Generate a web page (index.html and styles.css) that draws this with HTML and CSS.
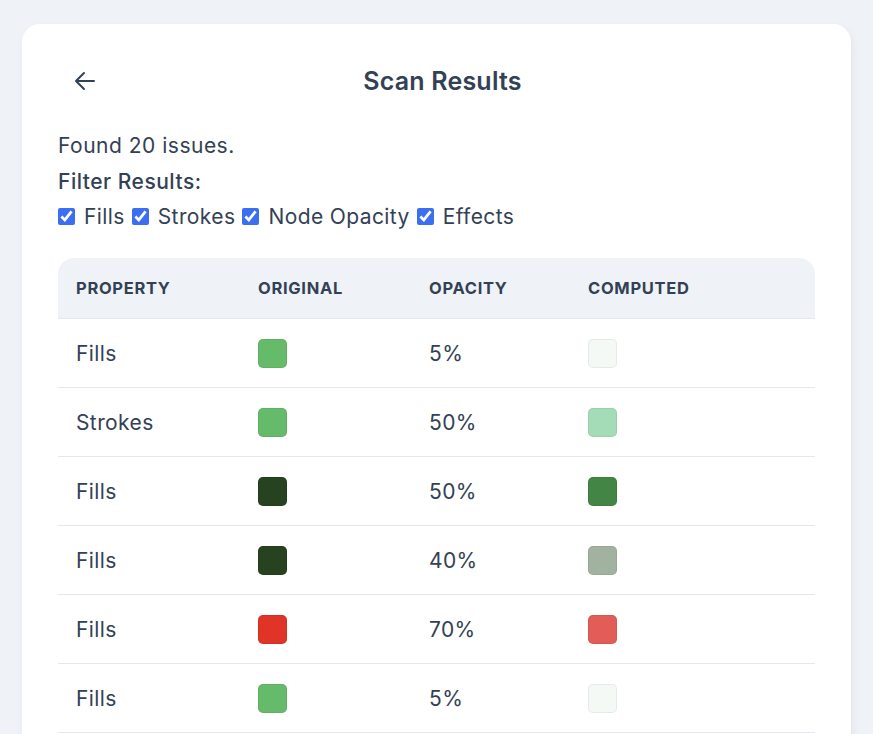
FILE: index.html
```html
<!DOCTYPE html>
<html>
<head>
<meta charset="utf-8">
<link rel="stylesheet" href="styles.css">
</head>
<body>
<div class="card">
  <div class="header">
    <button class="back" aria-label="Back">
      <svg width="22" height="22" viewBox="0 0 22 22" fill="none" stroke="#334155" stroke-width="2" stroke-linecap="round" stroke-linejoin="round"><path d="M20 11H2M10 3 2 11l8 8"/></svg>
    </button>
    <h1 class="title">Scan Results</h1>
  </div>
  <p class="found">Found 20 issues.</p>
  <p class="filter-label">Filter Results:</p>
  <div class="filters">
    <label class="filter"><input type="checkbox" checked> Fills</label>
    <label class="filter"><input type="checkbox" checked> Strokes</label>
    <label class="filter"><input type="checkbox" checked> Node Opacity</label>
    <label class="filter"><input type="checkbox" checked> Effects</label>
  </div>
  <div class="table">
    <div class="row head">
      <div class="cell">Property</div>
      <div class="cell">Original</div>
      <div class="cell">Opacity</div>
      <div class="cell">Computed</div>
    </div>
    <div class="row">
      <div class="cell">Fills</div>
      <div class="cell"><span class="swatch" style="background:#66bb6a"></span></div>
      <div class="cell">5%</div>
      <div class="cell"><span class="swatch" style="background:#f4f9f5"></span></div>
    </div>
    <div class="row">
      <div class="cell">Strokes</div>
      <div class="cell"><span class="swatch" style="background:#66bb6a"></span></div>
      <div class="cell">50%</div>
      <div class="cell"><span class="swatch" style="background:#a3dcb6"></span></div>
    </div>
    <div class="row">
      <div class="cell">Fills</div>
      <div class="cell"><span class="swatch" style="background:#27421f"></span></div>
      <div class="cell">50%</div>
      <div class="cell"><span class="swatch" style="background:#428545"></span></div>
    </div>
    <div class="row">
      <div class="cell">Fills</div>
      <div class="cell"><span class="swatch" style="background:#27421f"></span></div>
      <div class="cell">40%</div>
      <div class="cell"><span class="swatch" style="background:#a2b2a0"></span></div>
    </div>
    <div class="row">
      <div class="cell">Fills</div>
      <div class="cell"><span class="swatch" style="background:#e03428"></span></div>
      <div class="cell">70%</div>
      <div class="cell"><span class="swatch" style="background:#e25d57"></span></div>
    </div>
    <div class="row">
      <div class="cell">Fills</div>
      <div class="cell"><span class="swatch" style="background:#66bb6a"></span></div>
      <div class="cell">5%</div>
      <div class="cell"><span class="swatch" style="background:#f4f9f6"></span></div>
    </div>
  </div>
</div>
</body>
</html>
```

FILE: styles.css
```css
* { box-sizing: border-box; }
html, body { margin: 0; }
body {
  background: #eff3f8;
  padding: 24px 22px;
  font-family: Inter, "Noto Sans", sans-serif;
  color: #334155;
  height: 734px;
  overflow: hidden;
}
.card {
  background: #fff;
  border-radius: 18px;
  padding: 36px 36px 36px 36px;
  box-shadow: 2px 4px 10px rgba(15, 23, 42, 0.06);
  min-height: 900px;
}
.header {
  display: flex;
  align-items: center;
  height: 42px;
}
.back {
  border: 0;
  background: none;
  padding: 0;
  margin-left: 16px;
  width: 22px;
  height: 22px;
  display: flex;
  cursor: pointer;
}
.title {
  flex: 1;
  margin: 0;
  text-align: center;
  font-size: 25px;
  font-weight: 600;
  letter-spacing: 0.2px;
  color: #334155;
  padding-right: 26px;
}
p { margin: 0; }
.found {
  margin-top: 26px;
  font-size: 21px;
  line-height: 36px;
  letter-spacing: 0.5px;
}
.filter-label {
  font-size: 21px;
  line-height: 36px;
  font-weight: 500;
  letter-spacing: 0.5px;
}
.filters {
  display: flex;
  align-items: center;
  height: 32px;
  font-size: 21px;
  letter-spacing: 0.4px;
  gap: 7px;
}
.filter {
  display: flex;
  align-items: center;
  gap: 9px;
}
.filter input {
  margin: 0;
  width: 17px;
  height: 17px;
  accent-color: #3b6ef0;
}
.table {
  margin-top: 26px;
}
.row {
  display: grid;
  grid-template-columns: 182px 171px 159px 1fr;
  height: 69px;
  border-bottom: 1px solid #e4e7eb;
  align-items: center;
  font-size: 21px;
  letter-spacing: 0.4px;
}
.row.head {
  height: 61px;
  background: #eff3f8;
  border-radius: 16px 16px 0 0;
  font-size: 16.5px;
  font-weight: 700;
  text-transform: uppercase;
  letter-spacing: 0.7px;
}
.cell {
  padding: 0 18px;
  display: flex;
  align-items: center;
}
.swatch {
  display: block;
  width: 29px;
  height: 29px;
  border-radius: 5px;
  border: 1px solid rgba(0, 0, 0, 0.06);
}
```
